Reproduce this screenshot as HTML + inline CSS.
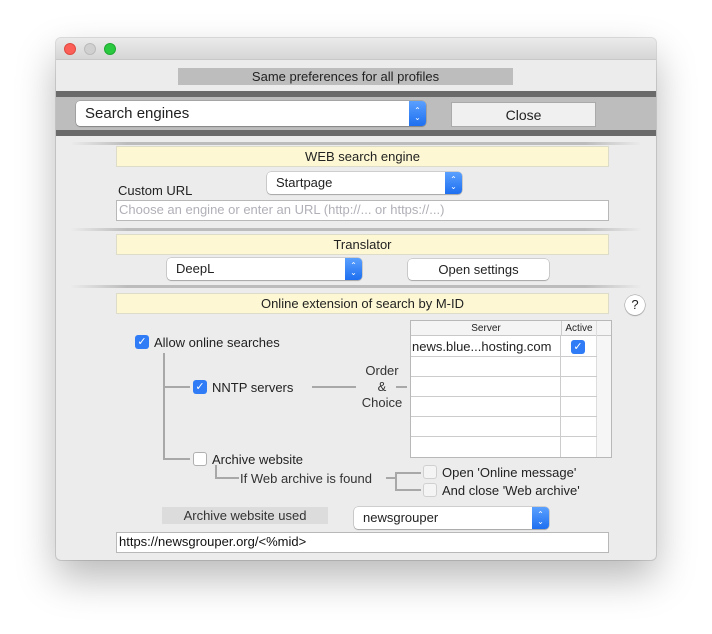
<!DOCTYPE html><html><head><style>
*{box-sizing:border-box;margin:0;padding:0}
body{width:712px;height:634px;background:#fff;font-family:"Liberation Sans",sans-serif;font-size:13px;color:#222;position:relative;overflow:hidden}
.a{position:absolute}
.win{left:56px;top:38px;width:600px;height:522px;background:#ececec;border-radius:5px;box-shadow:0 18px 40px rgba(0,0,0,.28),0 0 0 1px rgba(0,0,0,.12);overflow:hidden}
.tb{left:0;top:0;width:600px;height:22px;background:linear-gradient(#ebebeb,#d6d6d6);border-bottom:1px solid #c8c8c8}
.l{width:12px;height:12px;border-radius:50%;top:5px}
.yel{background:#fdf8d3;border:1px solid #dcdcc8;text-align:center;line-height:19px}
.pop{background:#fff;border-radius:4px;box-shadow:0 0 0 .5px rgba(0,0,0,.25),0 1px 1px rgba(0,0,0,.2);padding-left:9px;line-height:22px}
.pop .ar{position:absolute;right:0;top:0;bottom:0;width:17px;background:linear-gradient(#5aa0ff,#1e6ff0);border-radius:0 4px 4px 0;color:#fff;font-size:8px;text-align:center;line-height:7px;padding-top:4px}
.btn{background:#fff;border-radius:4px;box-shadow:0 0 0 .5px rgba(0,0,0,.25),0 1px 1px rgba(0,0,0,.2);text-align:center}
.sep{height:3px;background:linear-gradient(90deg,rgba(180,180,180,0),#bcbcbc 10%,#bcbcbc 90%,rgba(180,180,180,0));border-radius:2px}
.inp{background:#fff;border:1px solid #b8b8b8;padding-left:2px;line-height:18px}
.cb{width:14px;height:14px;border-radius:3px;background:#2f7cf6;color:#fff;font-size:11px;text-align:center;line-height:14px}
.cbw{width:14px;height:14px;border-radius:3px;background:#fff;border:1px solid #b0b0b0}
.cbg{width:14px;height:14px;border-radius:3px;background:#f4f4f4;border:1px solid #d0d0d0}
.ln{background:#a8a8a8}
</style></head><body>
<div class="a win">
<div class="a tb"></div>
<div class="a l" style="left:8px;background:#fc5f57;border:.5px solid #de4a41"></div>
<div class="a l" style="left:28px;background:#d0d0d0;border:.5px solid #bbb"></div>
<div class="a l" style="left:48px;background:#2ac940;border:.5px solid #1fa931"></div>
</div>
<div class="a" style="left:178px;top:68px;width:335px;height:17px;background:#bdbdbd;text-align:center;line-height:17px">Same preferences for all profiles</div>
<div class="a" style="left:56px;top:91px;width:600px;height:45px;background:#bdbdbd;border-top:6px solid #6a6a6a;border-bottom:6px solid #6a6a6a"></div>
<div class="a pop" style="left:76px;top:101px;width:350px;height:25px;font-size:15px;line-height:25px">Search engines<div class="ar" style="padding-top:6px">⌃<br>⌄</div></div>
<div class="a" style="left:451px;top:102px;width:145px;height:25px;background:#f0f0f0;border:1px solid #aaa;text-align:center;line-height:25px;font-size:14px">Close</div>
<div class="a sep" style="left:70px;top:142px;width:572px"></div>
<div class="a yel" style="left:116px;top:146px;width:493px;height:21px">WEB search engine</div>
<div class="a" style="left:118px;top:183px">Custom URL</div>
<div class="a pop" style="left:267px;top:172px;width:195px;height:22px">Startpage<div class="ar">⌃<br>⌄</div></div>
<div class="a inp" style="left:116px;top:200px;width:493px;height:21px;color:#b0b0b8">Choose an engine or enter an URL (http://... or https://...)</div>
<div class="a sep" style="left:70px;top:228px;width:572px"></div>
<div class="a yel" style="left:116px;top:234px;width:493px;height:21px">Translator</div>
<div class="a pop" style="left:167px;top:258px;width:195px;height:22px">DeepL<div class="ar">⌃<br>⌄</div></div>
<div class="a btn" style="left:408px;top:259px;width:141px;height:21px;line-height:21px">Open settings</div>
<div class="a sep" style="left:70px;top:285px;width:572px"></div>
<div class="a yel" style="left:116px;top:293px;width:493px;height:21px">Online extension of search by M-ID</div>
<div class="a" style="left:625px;top:295px;width:20px;height:20px;border-radius:50%;background:#fff;box-shadow:0 0 0 .5px #999,0 1px 1px #aaa;text-align:center;line-height:20px">?</div>
<div class="a cb" style="left:135px;top:335px">✓</div>
<div class="a" style="left:154px;top:335px">Allow online searches</div>
<div class="a ln" style="left:163px;top:353px;width:2px;height:107px"></div>
<div class="a ln" style="left:163px;top:386px;width:27px;height:2px"></div>
<div class="a ln" style="left:163px;top:458px;width:27px;height:2px"></div>
<div class="a cb" style="left:193px;top:380px">✓</div>
<div class="a" style="left:212px;top:380px">NNTP servers</div>
<div class="a ln" style="left:312px;top:386px;width:44px;height:2px"></div>
<div class="a" style="left:357px;top:363px;width:50px;text-align:center;line-height:16px;color:#333">Order<br>&amp;<br>Choice</div>
<div class="a ln" style="left:396px;top:386px;width:11px;height:2px"></div>
<div class="a" style="left:410px;top:320px;width:202px;height:138px;background:#fff;border:1px solid #b8b8b8"></div>
<div class="a" style="left:411px;top:321px;width:200px;height:15px;background:#f4f4f4;border-bottom:1px solid #c8c8c8;font-size:10px;line-height:15px"><span class="a" style="left:0;width:150px;text-align:center">Server</span><span class="a" style="left:150px;width:35px;text-align:center;border-left:1px solid #ccc">Active</span></div>
<div class="a" style="left:560px;top:336px;width:1px;height:121px;background:#ccc"></div>
<div class="a" style="left:596px;top:321px;width:1px;height:136px;background:#ddd"></div>
<div class="a" style="left:597px;top:336px;width:14px;height:121px;background:#f6f6f6"></div>
<div class="a" style="left:411px;top:356px;width:186px;height:1px;background:#ccc;box-shadow:0 20px 0 #ccc,0 40px 0 #ccc,0 60px 0 #ccc,0 80px 0 #ccc"></div>
<div class="a" style="left:412px;top:339px">news.blue...hosting.com</div>
<div class="a cb" style="left:571px;top:340px">✓</div>
<div class="a cbw" style="left:193px;top:452px"></div>
<div class="a" style="left:212px;top:452px">Archive website</div>
<div class="a ln" style="left:215px;top:465px;width:2px;height:14px"></div>
<div class="a ln" style="left:215px;top:477px;width:24px;height:2px"></div>
<div class="a" style="left:240px;top:471px;color:#333">If Web archive is found</div>
<div class="a ln" style="left:386px;top:477px;width:10px;height:2px"></div>
<div class="a ln" style="left:395px;top:472px;width:2px;height:19px"></div>
<div class="a ln" style="left:395px;top:472px;width:26px;height:2px"></div>
<div class="a ln" style="left:395px;top:489px;width:26px;height:2px"></div>
<div class="a cbg" style="left:423px;top:465px"></div>
<div class="a cbg" style="left:423px;top:483px"></div>
<div class="a" style="left:442px;top:465px">Open 'Online message'</div>
<div class="a" style="left:442px;top:483px">And close 'Web archive'</div>
<div class="a" style="left:162px;top:507px;width:166px;height:17px;background:#dcdcdc;text-align:center;line-height:17px;color:#333">Archive website used</div>
<div class="a pop" style="left:354px;top:507px;width:195px;height:22px">newsgrouper<div class="ar">⌃<br>⌄</div></div>
<div class="a inp" style="left:116px;top:532px;width:493px;height:21px;color:#111">https://newsgrouper.org/&lt;%mid&gt;</div>
</body></html>
